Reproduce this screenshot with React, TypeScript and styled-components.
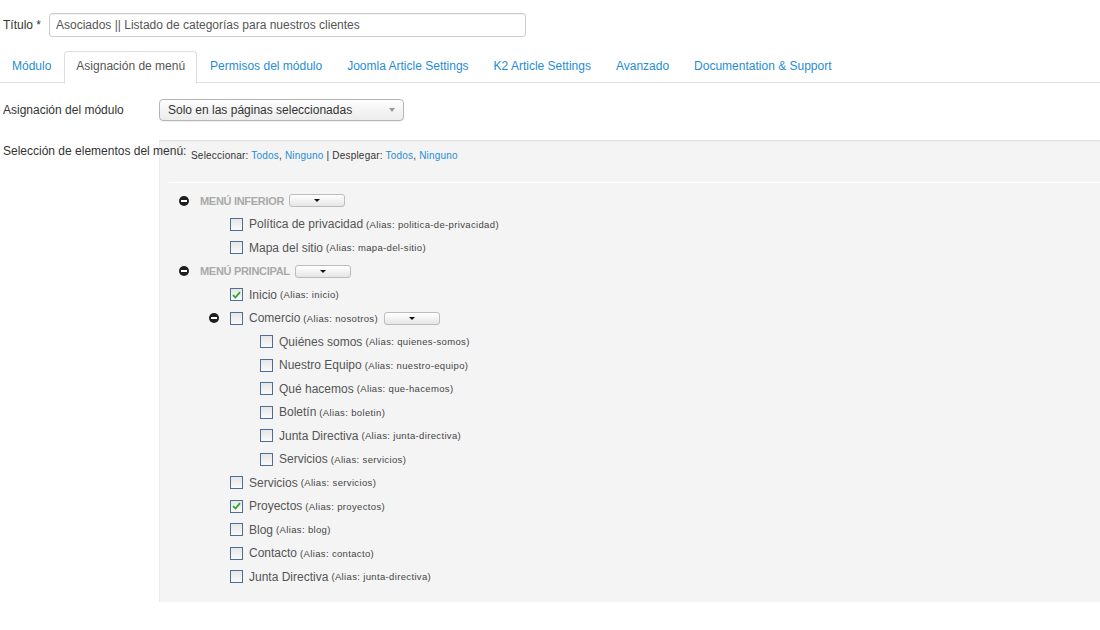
import React from "react";
import styled, { createGlobalStyle } from "styled-components";

const Global = createGlobalStyle`
  html, body { margin: 0; padding: 0; background: #fff; }
  body { font-family: "Liberation Sans", Arial, sans-serif; font-size: 12px; color: #333; }
  * { box-sizing: border-box; }
`;

const Page = styled.div`
  width: 1100px;
  height: 630px;
  overflow: hidden;
  padding-top: 13px;
`;

const TitleRow = styled.div`
  display: flex;
  align-items: center;
  padding-left: 3px;
  height: 24px;
`;

const TitleLabel = styled.label`
  width: 46px;
  color: #333;
  line-height: 14px;
`;

const TitleInput = styled.div`
  width: 477px;
  height: 24px;
  border: 1px solid #ccc;
  border-radius: 3px;
  box-shadow: inset 0 1px 1px rgba(0, 0, 0, 0.06);
  padding: 0 6px;
  display: flex;
  align-items: center;
  color: #555;
`;

const TabList = styled.div`
  display: flex;
  margin-top: 14px;
  height: 32px;
  border-bottom: 1px solid #ddd;
`;

const Tab = styled.div<{ $active?: boolean }>`
  height: 33px;
  padding: 0 11px 3px;
  margin-right: 1px;
  margin-bottom: -1px;
  display: flex;
  align-items: center;
  white-space: nowrap;
  border: 1px solid ${(p) => (p.$active ? "#ddd" : "transparent")};
  border-bottom-color: ${(p) => (p.$active ? "#fff" : "transparent")};
  border-radius: 4px 4px 0 0;
  background: ${(p) => (p.$active ? "#fff" : "transparent")};
  color: ${(p) => (p.$active ? "#555" : "#1f8dd6")};
`;

const FormRow = styled.div<{ $top: number }>`
  display: flex;
  align-items: flex-start;
  padding-left: 3px;
  margin-top: ${(p) => p.$top}px;
`;

const FieldLabel = styled.label<{ $pad: number }>`
  width: 156px;
  flex: none;
  white-space: nowrap;
  padding-top: ${(p) => p.$pad}px;
  line-height: 12px;
  color: #333;
  position: relative;
  z-index: 1;
`;

const Select = styled.div`
  width: 245px;
  height: 22px;
  border: 1px solid #b5b5b5;
  border-radius: 4px;
  background: linear-gradient(#fdfdfd, #ececec);
  box-shadow: 0 1px 1px rgba(0, 0, 0, 0.06);
  display: flex;
  align-items: center;
  justify-content: space-between;
  padding: 0 8px 0 8px;
  color: #333;
`;

const SelectCaret = styled.span`
  width: 0;
  height: 0;
  border-left: 3px solid transparent;
  border-right: 3px solid transparent;
  border-top: 4px solid #999;
`;

const Panel = styled.div`
  flex: 1;
  background: #f4f4f4;
  border-top: 1px solid #e2e2e2;
  border-left: 1px solid #ececec;
  box-shadow: inset 0 1px 1px rgba(0, 0, 0, 0.03);
  padding-bottom: 11px;
  min-height: 462px;
`;

const PanelHeader = styled.div`
  margin-left: 9px;
  padding: 9px 0 20px 22px;
  border-bottom: 1px solid #fff;
  font-size: 10px;
  letter-spacing: 0.2px;
  line-height: 12px;
  color: #333;
`;

const HeaderLink = styled.span`
  color: #1f8dd6;
`;

const Tree = styled.div`
  padding-top: 6px;
`;

const Row = styled.div<{ $level: number }>`
  height: 23.5px;
  display: flex;
  align-items: center;
  padding-left: ${(p) => 19 + p.$level * 30}px;
  white-space: nowrap;
`;

const Expander = styled.span<{ $show: boolean }>`
  width: 10px;
  height: 10px;
  flex: none;
  margin-right: 11px;
  border-radius: 50%;
  background: ${(p) => (p.$show ? "#1e1e1e" : "transparent")};
  display: flex;
  align-items: center;
  justify-content: center;
  &::after {
    content: "";
    display: ${(p) => (p.$show ? "block" : "none")};
    width: 6px;
    height: 2px;
    background: #fff;
  }
`;

const GroupTitle = styled.span`
  font-weight: bold;
  font-size: 11px;
  letter-spacing: -0.3px;
  color: #a9a9a9;
`;

const Check = styled.span<{ $checked?: boolean }>`
  width: 13px;
  height: 13px;
  flex: none;
  margin-right: 6px;
  border: 1px solid #4e6f94;
  background: linear-gradient(#e6e6e6, #fafafa);
  display: flex;
  align-items: center;
  justify-content: center;
`;

const ItemLabel = styled.span`
  color: #555;
  font-size: 12px;
`;

const Alias = styled.span`
  margin-left: 3px;
  font-size: 9.5px;
  letter-spacing: 0.35px;
  color: #444;
`;

const MiniButton = styled.span<{ $gap: number }>`
  width: 56px;
  height: 13px;
  margin-left: ${(p) => p.$gap}px;
  border: 1px solid #bcbcbc;
  border-radius: 3px;
  background: linear-gradient(#ffffff, #e6e6e6);
  display: flex;
  align-items: center;
  justify-content: center;
  &::after {
    content: "";
    width: 0;
    height: 0;
    border-left: 3px solid transparent;
    border-right: 3px solid transparent;
    border-top: 3px solid #111;
  }
`;

type Node = {
  label: string;
  alias?: string;
  level: number;
  group?: boolean;
  expander?: boolean;
  checked?: boolean;
  button?: boolean;
};

const nodes: Node[] = [
  { label: "MENÚ INFERIOR", level: 0, group: true, expander: true, button: true },
  { label: "Política de privacidad", alias: "politica-de-privacidad", level: 1 },
  { label: "Mapa del sitio", alias: "mapa-del-sitio", level: 1 },
  { label: "MENÚ PRINCIPAL", level: 0, group: true, expander: true, button: true },
  { label: "Inicio", alias: "inicio", level: 1, checked: true },
  { label: "Comercio", alias: "nosotros", level: 1, expander: true, button: true },
  { label: "Quiénes somos", alias: "quienes-somos", level: 2 },
  { label: "Nuestro Equipo", alias: "nuestro-equipo", level: 2 },
  { label: "Qué hacemos", alias: "que-hacemos", level: 2 },
  { label: "Boletín", alias: "boletin", level: 2 },
  { label: "Junta Directiva", alias: "junta-directiva", level: 2 },
  { label: "Servicios", alias: "servicios", level: 2 },
  { label: "Servicios", alias: "servicios", level: 1 },
  { label: "Proyectos", alias: "proyectos", level: 1, checked: true },
  { label: "Blog", alias: "blog", level: 1 },
  { label: "Contacto", alias: "contacto", level: 1 },
  { label: "Junta Directiva", alias: "junta-directiva", level: 1 },
];

const CheckMark = () => (
  <svg width="9" height="8" viewBox="0 0 9 8">
    <path d="M1 4.2 L3.4 6.5 L8 1.2" fill="none" stroke="#2fa52f" strokeWidth="1.8" />
  </svg>
);

const tabs = [
  "Módulo",
  "Asignación de menú",
  "Permisos del módulo",
  "Joomla Article Settings",
  "K2 Article Settings",
  "Avanzado",
  "Documentation & Support",
];

export default function App() {
  return (
    <>
      <Global />
      <Page>
        <TitleRow>
          <TitleLabel>Título *</TitleLabel>
          <TitleInput>Asociados || Listado de categorías para nuestros clientes</TitleInput>
        </TitleRow>
        <TabList>
          {tabs.map((t, i) => (
            <Tab key={t} $active={i === 1}>
              {t}
            </Tab>
          ))}
        </TabList>
        <FormRow $top={16}>
          <FieldLabel $pad={5}>Asignación del módulo</FieldLabel>
          <Select>
            <span>Solo en las páginas seleccionadas</span>
            <SelectCaret />
          </Select>
        </FormRow>
        <FormRow $top={19}>
          <FieldLabel $pad={5}>Selección de elementos del menú:</FieldLabel>
          <Panel>
            <PanelHeader>
              Seleccionar: <HeaderLink>Todos</HeaderLink>, <HeaderLink>Ninguno</HeaderLink> | Desplegar:{" "}
              <HeaderLink>Todos</HeaderLink>, <HeaderLink>Ninguno</HeaderLink>
            </PanelHeader>
            <Tree>
              {nodes.map((n, i) => (
                <Row key={i} $level={n.level}>
                  <Expander $show={!!n.expander} />
                  {n.group ? (
                    <>
                      <GroupTitle>{n.label}</GroupTitle>
                      <MiniButton $gap={5} />
                    </>
                  ) : (
                    <>
                      <Check $checked={n.checked}>{n.checked && <CheckMark />}</Check>
                      <ItemLabel>{n.label}</ItemLabel>
                      <Alias>(Alias: {n.alias})</Alias>
                      {n.button && <MiniButton $gap={6} />}
                    </>
                  )}
                </Row>
              ))}
            </Tree>
          </Panel>
        </FormRow>
      </Page>
    </>
  );
}
